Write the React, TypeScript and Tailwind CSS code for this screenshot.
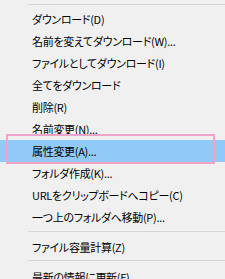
import React from 'react';

const items: { label: string; active?: boolean }[] = [
    { label: 'ダウンロード(D)' },
    { label: '名前を変えてダウンロード(W)...' },
    { label: 'ファイルとしてダウンロード(I)' },
    { label: '全てをダウンロード' },
    { label: '削除(R)' },
    { label: '名前変更(N)...' },
    { label: '属性変更(A)...', active: true },
    { label: 'フォルダ作成(K)...' },
    { label: 'URLをクリップボードへコピー(C)' },
    { label: '一つ上のフォルダへ移動(P)...' },
];

const Separator = ({ top }: { top: string }) => (
    <div className={`h-[8px] pl-[28px] ${top}`}>
        <div className="h-px bg-[#d5d5d5]" />
    </div>
);

const Row = ({ label, active }: { label: string; active?: boolean }) => (
    <div
        className={`flex h-[22px] items-center pl-[32px] text-[11px] tracking-[-0.3px] text-black [font-feature-settings:'palt'] ${
            active ? 'bg-[#91c9f7]' : ''
        }`}
    >
        {label}
    </div>
);

export default function App() {
    return (
        <div className="relative h-[279px] w-[225px] overflow-hidden bg-[#f0f0f0] font-['Noto_Sans_CJK_JP','Noto_Sans',sans-serif] leading-none">
            <Separator top="pt-[4px]" />
            {items.map((it) => (
                <Row key={it.label} label={it.label} active={it.active} />
            ))}
            <Separator top="pt-[3px]" />
            <Row label="ファイル容量計算(Z)" />
            <Separator top="pt-[2px]" />
            <Row label="最新の情報に更新(F)" />

            {/* annotation box */}
            <div className="pointer-events-none absolute left-[6px] top-[134px] h-[30px] w-[209px] border-[2.5px] border-[#f3a3c6]" />
        </div>
    );
}
